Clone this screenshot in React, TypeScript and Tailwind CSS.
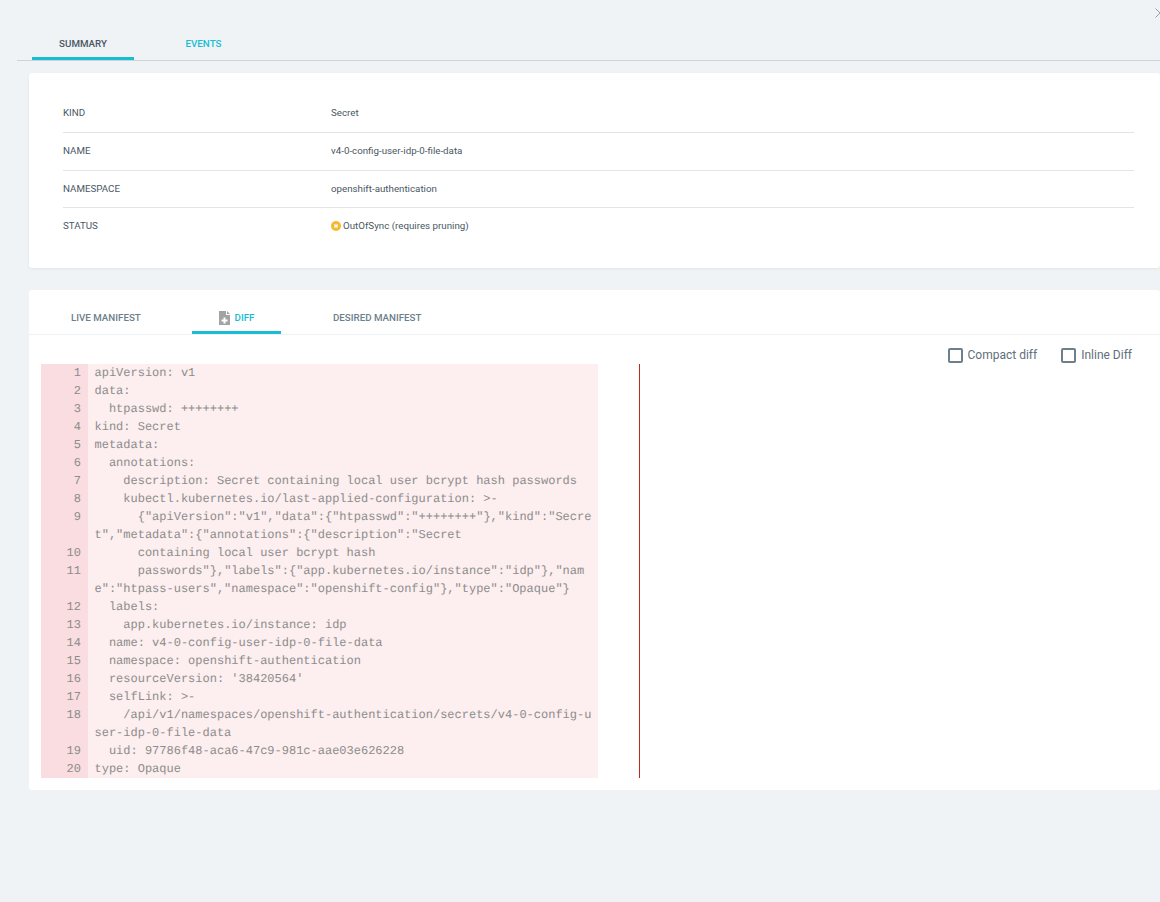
import React from 'react';

const summaryRows = [
  { label: 'KIND', value: 'Secret', height: 'h-[38px]' },
  { label: 'NAME', value: 'v4-0-config-user-idp-0-file-data', height: 'h-[38px]' },
  { label: 'NAMESPACE', value: 'openshift-authentication', height: 'h-[37px]' },
];

const manifestLines = [
  'apiVersion: v1',
  'data:',
  '  htpasswd: ++++++++',
  'kind: Secret',
  'metadata:',
  '  annotations:',
  '    description: Secret containing local user bcrypt hash passwords',
  '    kubectl.kubernetes.io/last-applied-configuration: >-',
  '      {"apiVersion":"v1","data":{"htpasswd":"++++++++"},"kind":"Secret","metadata":{"annotations":{"description":"Secret',
  '      containing local user bcrypt hash',
  '      passwords"},"labels":{"app.kubernetes.io/instance":"idp"},"name":"htpass-users","namespace":"openshift-config"},"type":"Opaque"}',
  '  labels:',
  '    app.kubernetes.io/instance: idp',
  '  name: v4-0-config-user-idp-0-file-data',
  '  namespace: openshift-authentication',
  "  resourceVersion: '38420564'",
  '  selfLink: >-',
  '    /api/v1/namespaces/openshift-authentication/secrets/v4-0-config-user-idp-0-file-data',
  '  uid: 97786f48-aca6-47c9-981c-aae03e626228',
  'type: Opaque',
];

const FileAddIcon = () => (
  <svg width="11" height="14" viewBox="0 0 11 14" className="shrink-0">
    <path d="M0 0H7V4H11V14H0Z" fill="#a3a3a3" />
    <path d="M8 0L11 3H8Z" fill="#a3a3a3" />
    <path d="M4.5 6.5H6.5V8.5H8.5V10.5H6.5V12.5H4.5V10.5H2.5V8.5H4.5Z" fill="#ffffff" />
  </svg>
);

const App: React.FC = () => {
  return (
    <div className="relative h-[902px] w-[1160px] overflow-hidden bg-[#eff3f6] font-['Roboto',sans-serif] text-[#495763]">
      <svg width="10" height="10" viewBox="0 0 10 10" className="absolute left-[1155px] top-[8px]">
        <path d="M0.5 0.5L9.5 9.5M9.5 0.5L0.5 9.5" stroke="#8fa4b1" strokeWidth="1" fill="none" />
      </svg>

      <div className="ml-[17px] flex h-[61px] items-end border-b border-[#c9d5d9] pl-[15px]">
        <div className="flex h-[60px] w-[102px] items-center justify-center border-b-[3px] border-[#18bdd2] pt-[32px] text-[9.75px] font-medium text-[#495763]">
          SUMMARY
        </div>
        <div className="flex h-[60px] w-[139px] items-center justify-center pt-[29px] text-[9.75px] font-medium text-[#18bdd2]">
          EVENTS
        </div>
      </div>

      <section className="ml-[29px] mt-[12px] h-[195px] rounded-[3px] bg-white pl-[34px] pr-[26px] pt-[22px] shadow-[0_1px_3px_rgba(0,0,0,0.06)]">
        {summaryRows.map((row) => (
          <div key={row.label} className={`flex items-center border-b border-[#dee6eb] text-[9.75px] ${row.height}`}>
            <span className="w-[268px]">{row.label}</span>
            <span>{row.value}</span>
          </div>
        ))}
        <div className="flex h-[37px] items-center text-[9.75px]">
          <span className="w-[268px]">STATUS</span>
          <span className="flex items-center gap-[2px]">
            <svg width="10" height="10" viewBox="0 0 10 10" className="-translate-y-px">
              <circle cx="5" cy="5" r="5" fill="#f4b92f" />
              <path d="M3.4 3.4L6.6 6.6M6.6 3.4L3.4 6.6" stroke="#ffffff" strokeWidth="1.4" />
            </svg>
            OutOfSync (requires pruning)
          </span>
        </div>
      </section>

      <section className="ml-[29px] mt-[22px] h-[500px] rounded-[3px] bg-white">
        <div className="flex h-[45px] items-end border-b border-[#eef2f4] text-[9.75px] font-medium text-[#6d7f8b]">
          <div className="flex h-[44px] w-[163px] items-center pl-[42px] pt-[12px]">LIVE MANIFEST</div>
          <div className="flex h-[44px] w-[89px] items-center justify-center gap-[5px] border-b-[3px] border-[#18bdd2] pt-[15px] text-[#18bdd2]">
            <FileAddIcon />
            DIFF
          </div>
          <div className="flex h-[44px] items-center pl-[52px] pt-[12px]">DESIRED MANIFEST</div>
        </div>

        <div className="flex h-[29px] items-center justify-end gap-[24px] pr-[28px] pt-[11px] text-[12px] text-[#5f6f7b]">
          <label className="flex items-center gap-[5px]">
            <span className="h-[15px] w-[15px] rounded-[2px] border-2 border-[#6d7f8b]" />
            Compact diff
          </label>
          <label className="flex items-center gap-[5px]">
            <span className="h-[15px] w-[15px] rounded-[2px] border-2 border-[#6d7f8b]" />
            Inline Diff
          </label>
        </div>

        <div className="flex pl-[12px]">
          <div className="w-[557px] bg-[#fdeeef] font-['Liberation_Mono',monospace] text-[12px] leading-[18px] text-[#8c8c8c] [text-rendering:geometricPrecision]">
            {manifestLines.map((line, index) => (
              <div key={index} className="flex">
                <span className="w-[47px] shrink-0 bg-[#f9dde0] pr-[7px] text-right">{index + 1}</span>
                <span className="w-[503.5px] whitespace-pre-wrap break-all pl-[6.5px]">{line}</span>
              </div>
            ))}
          </div>
          <div className="ml-[41px] w-px bg-[#c0281c]" />
        </div>
      </section>
    </div>
  );
};

export default App;
